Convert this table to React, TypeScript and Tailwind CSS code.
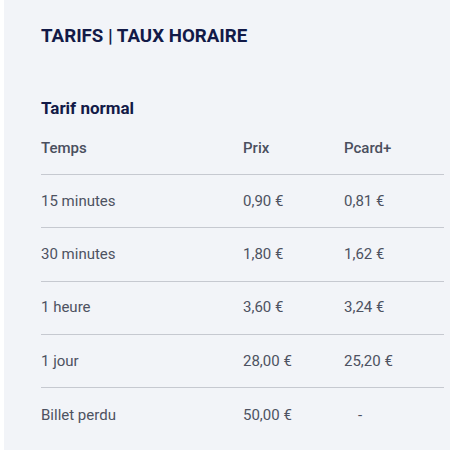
export default function App() {
  const rows = [
    { temps: '15 minutes', prix: '0,90 €', pcard: '0,81 €' },
    { temps: '30 minutes', prix: '1,80 €', pcard: '1,62 €' },
    { temps: '1 heure', prix: '3,60 €', pcard: '3,24 €' },
    { temps: '1 jour', prix: '28,00 €', pcard: '25,20 €' },
    { temps: 'Billet perdu', prix: '50,00 €', pcard: '-' },
  ];

  return (
    <div className="flex w-[450px] h-[450px] overflow-hidden bg-white" style={{ fontFamily: 'Roboto, "Noto Sans", sans-serif' }}>
      <div className="w-[4px] shrink-0 bg-white" />
      <div className="flex-1 h-[450px] bg-[#f2f4f8] pl-[37px] pr-[6px] pt-[23px]">
        <h1 className="text-[18.7px] leading-[26px] font-bold text-[#121a47]">TARIFS | TAUX HORAIRE</h1>

        <h2 className="mt-[47px] text-[17px] leading-[24px] font-bold text-[#121a47]">Tarif normal</h2>

        <div className="mt-[13px]">
          <div className="grid grid-cols-[202px_101px_1fr] h-[42px] items-start pt-[5px] border-b border-[#c6c9d0] text-[15px] leading-[20px] font-medium text-[#4a4f5e]">
            <span>Temps</span>
            <span>Prix</span>
            <span>Pcard+</span>
          </div>
          {rows.map((r, i) => (
            <div
              key={r.temps}
              className={`grid grid-cols-[202px_101px_1fr] h-[53.3px] items-center text-[15px] text-[#4d5261] ${
                i < rows.length - 1 ? 'border-b border-[#c6c9d0]' : ''
              }`}
            >
              <span>{r.temps}</span>
              <span>{r.prix}</span>
              <span className={r.pcard === '-' ? 'pl-[14px]' : ''}>{r.pcard}</span>
            </div>
          ))}
        </div>
      </div>
    </div>
  );
}
